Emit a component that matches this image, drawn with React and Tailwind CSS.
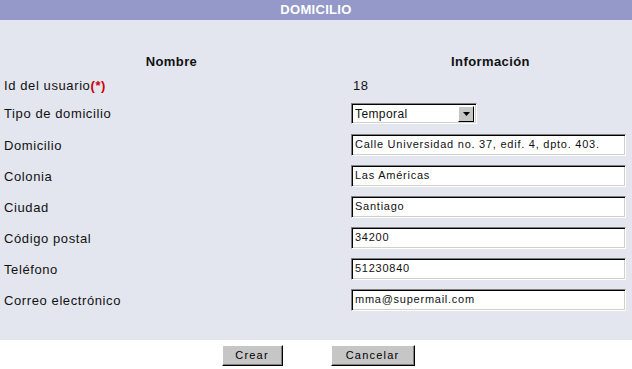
const font = { fontFamily: '"Liberation Sans", Arial, sans-serif' };

const rows = [
  { label: "Domicilio", value: "Calle Universidad no. 37, edif. 4, dpto. 403." },
  { label: "Colonia", value: "Las Américas" },
  { label: "Ciudad", value: "Santiago" },
  { label: "Código postal", value: "34200" },
  { label: "Teléfono", value: "51230840" },
  { label: "Correo electrónico", value: "mma@supermail.com" },
];

const inset =
  "border border-t-[#808080] border-l-[#808080] border-r-white border-b-white shadow-[inset_1px_1px_0_#000,inset_-1px_-1px_0_#d4d0c8]";

const Field = ({ value }) => (
  <div className={`w-[275px] h-[22px] bg-white flex items-center pl-[3px] ${inset}`}>
    <span className="text-[11px] tracking-[0.75px] text-[#111] leading-none">{value}</span>
  </div>
);

const Button = ({ children, width }) => (
  <button
    className={`${width} h-[21px] bg-[#c6c6c6] border border-t-white border-l-white border-r-black border-b-black shadow-[inset_-1px_-1px_0_#808080] text-[11px] tracking-[1.2px] text-black flex items-center justify-center`}
    style={font}
  >
    {children}
  </button>
);

export default function App() {
  return (
    <div className="w-[632px] h-[369px] bg-white text-[#111]" style={font}>
      <div className="h-[20px] bg-[#9599c9] flex items-center justify-center">
        <span className="text-white font-bold text-[13px] tracking-[0.3px]">DOMICILIO</span>
      </div>

      <div className="h-[320px] bg-[#e3e6ef] pt-[30px]">
        <div className="grid grid-cols-[351px_1fr] h-[24px] items-center">
          <div className="text-center font-bold text-[13px] tracking-[0.4px] pr-[8px]">Nombre</div>
          <div className="text-center font-bold text-[13px] tracking-[0.4px] pr-[2px]">Información</div>
        </div>

        <div className="grid grid-cols-[351px_1fr] h-[24px] items-center">
          <div className="pl-[4px] text-[13px] tracking-[0.6px]">
            Id del usuario<span className="text-[#cc0000] font-bold">(*)</span>
          </div>
          <div className="pl-[2px] text-[13px] tracking-[0.6px]">18</div>
        </div>

        <div className="grid grid-cols-[351px_1fr] h-[31px] items-center">
          <div className="pl-[4px] text-[13px] tracking-[0.6px]">Tipo de domicilio</div>
          <div className={`w-[126px] h-[21px] bg-white flex items-center justify-between pl-[3px] pr-[2px] ${inset}`}>
            <span className="text-[12px] tracking-[0.4px]">Temporal</span>
            <div className="w-[16px] h-[16px] bg-[#c6c6c6] border border-t-white border-l-white border-r-black border-b-black flex items-center justify-center">
              <svg width="7" height="4" viewBox="0 0 7 4">
                <path d="M0 0h7L3.5 4z" fill="#000" />
              </svg>
            </div>
          </div>
        </div>

        {rows.map((r) => (
          <div key={r.label} className="grid grid-cols-[351px_1fr] h-[31px] items-center">
            <div className="pl-[4px] text-[13px] tracking-[0.6px] pt-[2px]">{r.label}</div>
            <Field value={r.value} />
          </div>
        ))}
      </div>

      <div className="flex justify-center gap-[48px] pt-[5px] pl-[4px]">
        <Button width="w-[61px]">Crear</Button>
        <Button width="w-[84px]">Cancelar</Button>
      </div>
    </div>
  );
}
